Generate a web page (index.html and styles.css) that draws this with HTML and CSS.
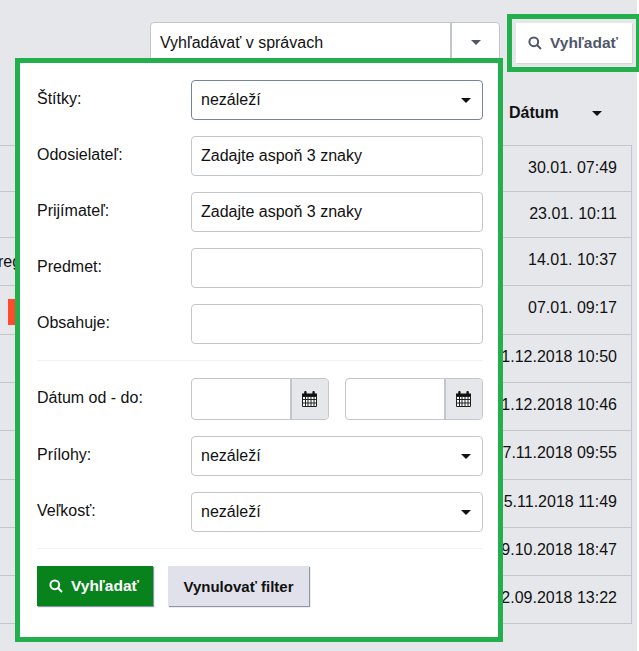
FILE: index.html
```html
<!DOCTYPE html>
<html lang="sk">
<head>
<meta charset="utf-8">
<title>Vyhľadať</title>
<link rel="stylesheet" href="styles.css">
</head>
<body>
<div class="page">
  <div class="toolbar">
    <div class="scope">
      <span class="scope-label">Vyhľadávať v správach</span>
      <span class="scope-toggle"><svg class="caret caret-grey" viewBox="0 0 10 5"><path d="M0 0h10L5 5z"/></svg></span>
    </div>
    <button class="btn-top">
      <svg class="search-icon" viewBox="0 0 14 14"><circle cx="5.8" cy="5.8" r="4.4"/><path d="M9 9l4 4"/></svg>
      Vyhľadať
    </button>
  </div>
  <div class="head-row"><b class="date-head">Dátum</b><svg class="caret" viewBox="0 0 10 5"><path d="M0 0h10L5 5z"/></svg></div>
  <div class="table">
    <div class="row"><span class="cell">30.01. 07:49</span></div>
    <div class="row"><span class="cell">23.01. 10:11</span></div>
    <div class="row"><span class="side-text">reg</span><span class="cell">14.01. 10:37</span></div>
    <div class="row"><span class="tag"></span><span class="cell">07.01. 09:17</span></div>
    <div class="row"><span class="cell">21.12.2018 10:50</span></div>
    <div class="row"><span class="cell">21.12.2018 10:46</span></div>
    <div class="row"><span class="cell">27.11.2018 09:55</span></div>
    <div class="row"><span class="cell">15.11.2018 11:49</span></div>
    <div class="row"><span class="cell">19.10.2018 18:47</span></div>
    <div class="row"><span class="cell">12.09.2018 13:22</span></div>
  </div>
</div>

<div class="highlight"></div>

<form class="panel">
  <div class="field"><label>Štítky:</label><div class="control select focus">nezáleží<svg class="caret" viewBox="0 0 10 5"><path d="M0 0h10L5 5z"/></svg></div></div>
  <div class="field"><label>Odosielateľ:</label><div class="control">Zadajte aspoň 3 znaky</div></div>
  <div class="field"><label>Prijímateľ:</label><div class="control">Zadajte aspoň 3 znaky</div></div>
  <div class="field"><label>Predmet:</label><div class="control"></div></div>
  <div class="field"><label>Obsahuje:</label><div class="control"></div></div>
  <hr class="rule">
  <div class="field field-date"><label>Dátum od - do:</label>
    <div class="dates">
      <div class="date"><span class="date-input"></span><span class="date-btn"><svg class="cal" viewBox="0 0 15 16"><path class="cal-solid" d="M0 2.5h2.2V1.2C2.2.5 2.7 0 3.4 0s1.2.5 1.2 1.2v1.3h5.8V1.2c0-.7.5-1.2 1.2-1.2s1.2.5 1.2 1.2v1.3H15V6H0z"/><path class="cal-grid" d="M.5 5.5h14v10H.5zM.5 8.5h14M.5 12h14M3.5 5.5v10M6 5.5v10M9 5.5v10M12 5.5v10"/></svg></span></div>
      <div class="date"><span class="date-input"></span><span class="date-btn"><svg class="cal" viewBox="0 0 15 16"><path class="cal-solid" d="M0 2.5h2.2V1.2C2.2.5 2.7 0 3.4 0s1.2.5 1.2 1.2v1.3h5.8V1.2c0-.7.5-1.2 1.2-1.2s1.2.5 1.2 1.2v1.3H15V6H0z"/><path class="cal-grid" d="M.5 5.5h14v10H.5zM.5 8.5h14M.5 12h14M3.5 5.5v10M6 5.5v10M9 5.5v10M12 5.5v10"/></svg></span></div>
    </div>
  </div>
  <div class="field"><label>Prílohy:</label><div class="control select">nezáleží<svg class="caret" viewBox="0 0 10 5"><path d="M0 0h10L5 5z"/></svg></div></div>
  <div class="field"><label>Veľkosť:</label><div class="control select">nezáleží<svg class="caret" viewBox="0 0 10 5"><path d="M0 0h10L5 5z"/></svg></div></div>
  <hr class="rule rule-bottom">
  <div class="actions">
    <button type="button" class="btn btn-green"><svg class="search-icon" viewBox="0 0 14 14"><circle cx="5.8" cy="5.8" r="4.4"/><path d="M9 9l4 4"/></svg>Vyhľadať</button>
    <button type="button" class="btn btn-grey">Vynulovať filter</button>
  </div>
</form>
</body>
</html>
```
FILE: styles.css
```css
* { box-sizing: border-box; }
html, body { margin: 0; height: 651px; overflow: hidden; background: #fff; }
body { font-family: "Liberation Sans", Arial, sans-serif; font-size: 16px; color: #111; position: relative; }
.page { width: 637px; height: 651px; background: #e6e7eb; padding-top: 22px; overflow: hidden; }
.toolbar { display: flex; height: 41px; padding-left: 150px; }
.scope { width: 350px; height: 41px; display: flex; background: #fff; border: 1px solid #c3c7cc; border-radius: 4px; }
.scope-label { flex: 1; padding: 0 9px; line-height: 40px; }
.scope-toggle { width: 49px; border-left: 2px solid #c3c7cc; display: flex; align-items: center; justify-content: center; }
.btn-top { margin: 1px 0 0 16px; width: 116px; height: 40px; border: 0; padding: 0 2px 0 0; background: #fff; color: #4f5768; font: bold 15.5px "Liberation Sans", Arial, sans-serif; display: flex; align-items: center; justify-content: center; gap: 8px; box-shadow: 1px 1px 1px #d4d6da; }
.search-icon { width: 14px; height: 14px; fill: none; stroke: currentColor; stroke-width: 2; flex: none; }
.caret { width: 10px; height: 5px; fill: #111; flex: none; }
.caret-grey { fill: #4f5768; }
.head-row { height: 82px; padding: 41px 0 0 509px; display: flex; align-items: flex-start; }
.date-head { line-height: 17px; width: 83px; }
.head-row .caret { margin-top: 7px; }
.table { width: 632px; height: 479px; border-bottom: 1px solid #c3c7cc; border-right: 1px solid #c3c7cc; display: grid; grid-template-rows: 46px 46px 48px 49px 48px 48px 49px 48px 48px 47px; }
.row { border-top: 1px solid #c3c7cc; display: flex; justify-content: space-between; align-items: flex-start; position: relative; padding: 13px 14px 0 0; }
.cell { margin-left: auto; white-space: nowrap; }
.side-text { position: absolute; left: -2px; top: 15px; width: 17px; overflow: hidden; white-space: nowrap; }
.tag { position: absolute; left: 8px; top: 13px; width: 7px; height: 26px; background: #ff4b2b; }
.highlight { position: absolute; left: 507px; top: 14px; width: 132px; height: 58px; border: 5px solid #23b04c; border-right-width: 3px; }
.panel { position: absolute; left: 15px; top: 58px; width: 488px; height: 584px; background: #fff; border: 5px solid #23b04c; padding: 17px 10px 0 17px; }
.field { display: flex; height: 40px; margin-bottom: 16px; }
.field label { width: 154px; flex: none; line-height: 37px; white-space: nowrap; }
.control { width: 292px; height: 40px; flex: none; border: 1px solid #c3c7cc; border-radius: 4px; padding: 0 9px; line-height: 38px; }
.select { display: flex; justify-content: space-between; align-items: center; padding-right: 11px; }
.focus { border-color: #77859a; }
.rule { border: 0; border-top: 1px solid #f2f2f2; margin: 0 0 17px; width: 446px; }
.field-date { height: 42px; }
.field-date label { line-height: 39px; }
.dates { display: flex; gap: 16px; flex: none; }
.date { width: 138px; height: 42px; border: 1px solid #c3c7cc; border-radius: 4px; display: flex; overflow: hidden; }
.date-input { flex: 1; }
.date-btn { width: 38px; background: #e6e7eb; border-left: 2px solid #c3c7cc; display: flex; align-items: center; justify-content: center; padding-right: 2px; }
.cal { width: 15px; height: 16px; }
.cal-solid { fill: #111; }
.cal-grid { fill: #fff; stroke: #222; stroke-width: 1; }
.rule-bottom { margin: 0 0 17px; }
.actions { display: flex; gap: 15px; }
.btn { height: 40px; border: 0; padding: 0 2px 0 0; font: bold 15px "Liberation Sans", Arial, sans-serif; display: flex; align-items: center; justify-content: center; }
.btn-green { width: 116px; background: #07821c; color: #fff; gap: 8px; font-size: 15.5px; box-shadow: 1px 1px 1px #8c97a6; }
.btn-grey { width: 141px; padding: 0; background: #e0e1ea; color: #111; box-shadow: 1px 1px 1px #8c97a6; }
```
